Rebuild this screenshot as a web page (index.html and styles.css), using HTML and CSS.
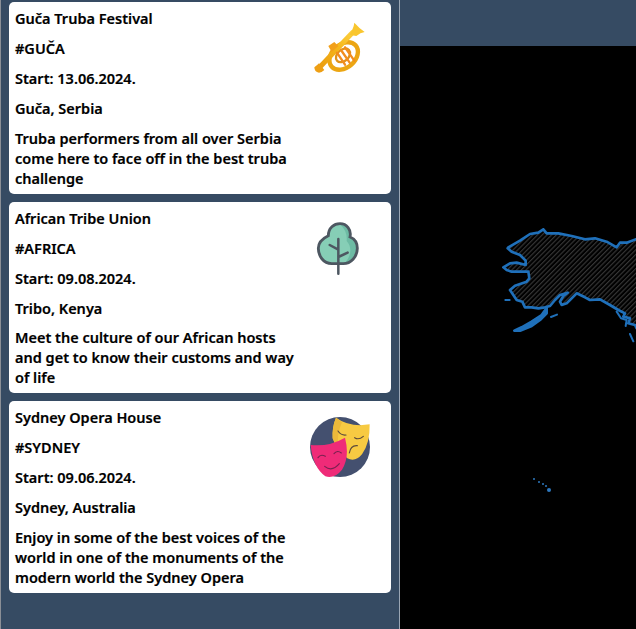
FILE: index.html
```html
<!DOCTYPE html>
<html lang="en">
<head>
<meta charset="utf-8">
<title>Festivals</title>
<link rel="stylesheet" href="styles.css">
</head>
<body>
<div class="app">
  <aside class="sidebar">
    <article class="card">
      <div class="info">
        <p>Guča Truba Festival</p>
        <p>#GUČA</p>
        <p>Start: 13.06.2024.</p>
        <p>Guča, Serbia</p>
        <p>Truba performers from all over Serbia come here to face off in the best truba challenge</p>
      </div>
      <svg class="icon" viewBox="45 24 180 180" aria-hidden="true">
        <defs>
          <linearGradient id="gold" x1="0" y1="1" x2="1" y2="0">
            <stop offset="0" stop-color="#ea9c10"/>
            <stop offset=".6" stop-color="#f6b81c"/>
            <stop offset="1" stop-color="#fcd040"/>
          </linearGradient>
        </defs>
        <ellipse cx="146" cy="138" rx="48" ry="35" transform="rotate(-42 146 138)" fill="none" stroke="#eca613" stroke-width="13"/>
        <ellipse cx="144" cy="136" rx="24" ry="17" transform="rotate(-42 144 136)" fill="none" stroke="#e0921a" stroke-width="7"/>
        <path d="M72 174 L172 68" stroke="url(#gold)" stroke-width="15" stroke-linecap="round" fill="none"/>
        <path d="M178 38 Q192 54 209 66 Q196 68 184 78 L162 74 Q176 56 178 38Z" fill="#f9c62e"/>
        <path d="M58 172 Q66 166 72 160 L88 180 Q80 188 72 188 Q58 186 58 172Z" fill="#ee9f14"/>
        <path d="M100 108 L118 96 L130 108 L110 126Z" fill="#f2a01a"/>
        <path d="M126 128 L150 164 M138 120 L164 158 M150 112 L178 152" stroke="#f28c1e" stroke-width="7" stroke-linecap="round" fill="none"/>
      </svg>
    </article>
    <article class="card">
      <div class="info">
        <p>African Tribe Union</p>
        <p>#AFRICA</p>
        <p>Start: 09.08.2024.</p>
        <p>Tribo, Kenya</p>
        <p>Meet the culture of our African hosts and get to know their customs and way of life</p>
      </div>
      <svg class="icon" viewBox="30 9 180 180" aria-hidden="true">
        <path d="M85 62 C85 38 102 26 120 26 C140 26 155 44 150 66 C165 72 172 86 172 100 C172 126 152 146 130 146 L95 146 C70 146 55 122 55 100 C55 82 68 70 85 62Z" fill="#86ceb6"/>
        <path d="M122 30 C140 28 155 44 150 66 C165 72 172 86 172 100 C172 126 152 146 132 146 C150 130 160 100 140 78 C142 60 136 42 122 30Z" fill="#6dbba4"/>
        <path d="M85 62 C85 38 102 26 120 26 C140 26 155 44 150 66 C165 72 172 86 172 100 C172 126 152 146 130 146 L95 146 C70 146 55 122 55 100 C55 82 68 70 85 62Z" fill="none" stroke="#4d5761" stroke-width="8.5"/>
        <path d="M115 72 L115 176 M89 90 L115 104 M115 126 L143 113" fill="none" stroke="#4d5761" stroke-width="7.5" stroke-linecap="round"/>
      </svg>
    </article>
    <article class="card">
      <div class="info">
        <p>Sydney Opera House</p>
        <p>#SYDNEY</p>
        <p>Start: 09.06.2024.</p>
        <p>Sydney, Australia</p>
        <p>Enjoy in some of the best voices of the world in one of the monuments of the modern world the Sydney Opera</p>
      </div>
      <svg class="icon" viewBox="30 20 180 180" aria-hidden="true">
        <circle cx="120" cy="110" r="90" fill="#44506f"/>
        <path d="M108 22 Q150 52 209 42 Q210 100 186 132 Q166 156 142 144 Q112 122 98 84 Q96 50 108 22Z" fill="#f7ca42"/>
        <path d="M108 22 Q96 50 98 84 Q104 102 114 116 Q110 70 126 36Z" fill="#ecb93a"/>
        <path d="M114 62 Q124 76 138 74 M164 82 Q176 90 190 78 M148 128 Q152 104 172 106" fill="none" stroke="#5d4c3c" stroke-width="3.5" stroke-linecap="round"/>
        <path d="M32 104 Q86 110 135 82 Q150 140 126 178 Q104 206 76 198 Q38 170 32 104Z" fill="#ef2b78"/>
        <path d="M54 142 Q62 130 76 138 M102 130 Q112 118 124 128 M74 168 Q96 186 118 160" fill="none" stroke="#7a2150" stroke-width="3.5" stroke-linecap="round"/>
      </svg>
    </article>
  </aside>
  <main class="content">
    <div class="topbar"></div>
    <div class="map">
      <svg class="map-svg" viewBox="0 0 236 583" aria-hidden="true">
        <defs>
          <pattern id="hatch" width="10" height="10" patternUnits="userSpaceOnUse" patternTransform="rotate(45)">
            <rect width="3.5" height="10" fill="#363636"/>
          </pattern>
        </defs>
        <g class="coast" transform="translate(95 174) scale(.3333)" stroke="#1f70ba" stroke-width="8" stroke-linejoin="round" stroke-linecap="round">
          <path fill="url(#hatch)" d="M40 82 L75 62 L105 42 L130 38 L145 28 L155 40 L190 40 L230 48 L270 58 L300 55 L335 65 L365 82 L375 68 L395 68 L430 55 L430 325 L425 325 L420 315 L400 310 L405 295 L385 290 L390 280 L370 270 L345 255 L315 238 L285 240 L270 232 L245 220 L230 235 L215 250 L200 255 L195 245 L205 228 L218 218 L195 225 L180 240 L165 258 L150 262 L130 265 L110 262 L90 262 L82 245 L65 240 L45 210 L60 197 L95 185 L103 175 L100 155 L75 155 L50 155 L35 150 L25 142 L45 130 L65 128 L92 135 L92 122 L75 105 L50 95 L38 85Z"/>
          <path fill="#1f70ba" d="M155 264 L140 285 L110 305 L80 322 L58 332 L75 332 L110 318 L135 300 L155 280Z"/>
          <path fill="none" stroke-width="6" d="M168 291 L186 284 M31 240 L44 240 M365 275 L378 295 L395 300 L392 318 M405 342 L415 364"/>
        </g>
        <g class="coast" fill="#2d78bf">
          <circle cx="134" cy="433" r="1"/>
          <circle cx="139" cy="436" r="1"/>
          <circle cx="143" cy="438" r="1"/>
          <circle cx="146" cy="440" r="1"/>
          <circle cx="149" cy="444" r="2"/>
        </g>
      </svg>
    </div>
  </main>
</div>
</body>
</html>
```
FILE: styles.css
```css
* {
  box-sizing: border-box;
}

html,
body {
  margin: 0;
  height: 100%;
  overflow: hidden;
}

body {
  font-family: "Noto Sans", "Open Sans", sans-serif;
  font-size: 14.5px;
  font-weight: 600;
  line-height: 19.95px;
  color: #000;
  -webkit-text-stroke: 0.2px #000;
}

.app {
  display: flex;
  height: 100vh;
}

.sidebar {
  flex: 0 0 400px;
  display: flex;
  flex-direction: column;
  gap: 8px;
  padding: 2px 8px;
  background: #364b63;
  border-left: 1px solid #8b8f96;
  border-right: 1px solid #9aa6b4;
}

.card {
  display: flex;
  justify-content: space-between;
  align-items: flex-start;
  padding: 7px 21px 5px 6px;
  background: #fff;
  border-radius: 5px;
}

.info {
  width: 290px;
}

.info p {
  margin: 0 0 10px;
}

.info p:last-child {
  margin-bottom: 0;
}

.icon {
  flex: 0 0 60px;
  width: 60px;
  height: 60px;
  margin-top: 9px;
}

.content {
  flex: 1;
  display: flex;
  flex-direction: column;
  min-width: 0;
}

.topbar {
  flex: 0 0 46px;
  background: #364b63;
}

.map {
  flex: 1;
  background: #000;
  min-height: 0;
}

.map-svg {
  display: block;
  width: 100%;
  height: 100%;
}

.coast {
  filter: blur(0.4px);
}
```
